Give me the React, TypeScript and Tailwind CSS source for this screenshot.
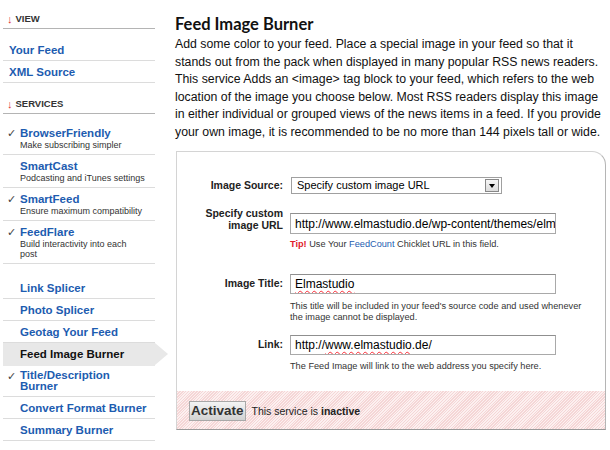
import React from 'react';

const LINK = 'text-[#1d5cb0]';

function Header({ label, top }: { label: string; top: string }) {
  return (
    <div className={`${top} flex items-center gap-[3px] border-b border-[#b4b4b4] pb-[2px] pl-[4px] text-[9.5px] font-bold leading-[14px] text-[#333]`}>
      <span className="text-[11px] font-normal text-[#d33]">↓</span>
      {label}
    </div>
  );
}

function Simple({ label, indent = 'pl-[6px]', top = '' }: { label: string; indent?: string; top?: string }) {
  return (
    <div className={`${top} ${indent} border-b border-[#dcdcdc] pt-[4px] pb-[3px] text-[11.5px] font-bold leading-[14px] ${LINK}`}>
      {label}
    </div>
  );
}

function Service({ title, sub, checked, top = '' }: { title: string; sub: React.ReactNode; checked?: boolean; top?: string }) {
  return (
    <div className={`${top} relative border-b border-[#dcdcdc] pt-[4px] pb-[4px] pl-[17px]`}>
      {checked && <span className="absolute left-[4px] top-[4px] text-[11px] leading-[14px] text-[#444]">✓</span>}
      <div className={`text-[11.5px] font-bold leading-[14px] ${LINK}`}>{title}</div>
      <div className="text-[9px] leading-[10px] text-[#333]">{sub}</div>
    </div>
  );
}

function Sidebar() {
  return (
    <aside className="ml-[3px] w-[152px] shrink-0">
      <Header label="VIEW" top="mt-[12px]" />
      <Simple label="Your Feed" top="mt-[10px]" />
      <Simple label="XML Source" />
      <Header label="SERVICES" top="mt-[14px]" />
      <Service top="mt-[8px]" checked title="BrowserFriendly" sub="Make subscribing simpler" />
      <Service title="SmartCast" sub="Podcasting and iTunes settings" />
      <Service checked title="SmartFeed" sub="Ensure maximum compatibility" />
      <Service checked title="FeedFlare" sub={<>Build interactivity into each<br />post</>} />
      <Simple label="Link Splicer" indent="pl-[17px]" top="mt-[13px]" />
      <Simple label="Photo Splicer" indent="pl-[17px]" />
      <Simple label="Geotag Your Feed" indent="pl-[17px]" />
      <div className="relative h-[23px] bg-[#e8e8e8] pl-[17px] pt-[4px] text-[11.5px] font-bold leading-[15px] text-[#111]">
        Feed Image Burner
        <span className="absolute left-full top-0 h-0 w-0 border-y-[11.5px] border-l-[13px] border-y-transparent border-l-[#e8e8e8]" />
      </div>
      <div className="relative border-b border-[#dcdcdc] pt-[4px] pb-[4px] pl-[17px]">
        <span className="absolute left-[4px] top-[4px] text-[11px] leading-[12px] text-[#444]">✓</span>
        <div className={`text-[11.5px] font-bold leading-[11px] ${LINK}`}>Title/Description<br />Burner</div>
      </div>
      <Simple label="Convert Format Burner" indent="pl-[17px]" />
      <Simple label="Summary Burner" indent="pl-[17px]" />
    </aside>
  );
}

function Field({ children, w = 'w-[266px]', h = 'h-[20px]' }: { children: React.ReactNode; w?: string; h?: string }) {
  return (
    <div className={`${w} ${h} flex items-center overflow-hidden whitespace-nowrap border border-[#a9a9a9] border-t-[#8f8f8f] bg-white pl-[4px] text-[12px] text-black`}>
      {children}
    </div>
  );
}

const Squiggle = ({ children }: { children: React.ReactNode }) => (
  <span className="underline decoration-red-500 decoration-wavy decoration-1 underline-offset-2">{children}</span>
);

export default function App() {
  return (
    <div className="flex h-[450px] w-[610px] overflow-hidden bg-white font-['Liberation_Sans',Arial,sans-serif] text-[#111]">
      <Sidebar />
      <main className="ml-[20px] flex-1">
        <h1 className="mt-[14px] font-['Lato',sans-serif] text-[16.5px] font-bold leading-[20px] text-[#111]">Feed Image Burner</h1>
        <p className="mt-[2px] whitespace-nowrap text-[12.3px] leading-[17.5px] text-[#111]">
          Add some color to your feed. Place a special image in your feed so that it<br />
          stands out from the pack when displayed in many popular RSS news readers.<br />
          This service Adds an &lt;image&gt; tag block to your feed, which refers to the web<br />
          location of the image you choose below. Most RSS readers display this image<br />
          in either individual or grouped views of the news items in a feed. If you provide<br />
          your own image, it is recommended to be no more than 144 pixels tall or wide.
        </p>

        <section className="mt-[10px] ml-[1px] w-[430px] rounded-tr-[14px] border border-[#d4d4d4] border-r-[#b5b5b5] border-b-[#9a9a9a]">
          <div className="pl-[10px]">
            <div className="mt-[25px] flex items-center gap-[8px]">
              <label className="w-[96px] text-right text-[10.5px] font-bold text-[#222]">Image Source:</label>
              <div className="flex h-[17px] w-[211px] items-center justify-between border border-[#a0a0a0] bg-white pl-[5px] pr-[2px] text-[11px] text-black">
                Specify custom image URL
                <span className="flex h-[13px] w-[14px] items-center justify-center border border-[#888] bg-gradient-to-b from-[#f6f6f6] to-[#dcdcdc]">
                  <span className="h-0 w-0 border-x-[3.5px] border-t-[4px] border-x-transparent border-t-black" />
                </span>
              </div>
            </div>

            <div className="mt-[19px] flex items-start gap-[7px]">
              <label className="-mt-[6px] w-[96px] text-right text-[10.5px] font-bold leading-[12px] text-[#222]">Specify custom<br />image URL</label>
              <Field h="h-[21px]">http://www.elmastudio.de/wp-content/themes/elm</Field>
            </div>
            <p className="mt-[5px] ml-[103px] text-[9.2px] leading-[11px] text-[#333]">
              <span className="font-bold text-[#e0202a]">Tip!</span> Use Your <span className={LINK}>FeedCount</span> Chicklet URL in this field.
            </p>

            <div className="mt-[24px] flex items-center gap-[7px]">
              <label className="w-[96px] text-right text-[10.5px] font-bold text-[#222]">Image Title:</label>
              <Field><Squiggle>Elmastudio</Squiggle></Field>
            </div>
            <p className="mt-[7px] ml-[103px] text-[9.2px] leading-[11px] text-[#333]">
              This title will be included in your feed's source code and used whenever<br />
              the image cannot be displayed.
            </p>

            <div className="mt-[12px] flex items-center gap-[7px]">
              <label className="w-[96px] text-right text-[10.5px] font-bold text-[#222]">Link:</label>
              <Field>http://<Squiggle>www.elmastudio</Squiggle>.de/</Field>
            </div>
            <p className="mt-[6px] ml-[103px] text-[9.2px] leading-[11px] text-[#333]">
              The Feed Image will link to the web address you specify here.
            </p>
          </div>

          <div className="mt-[19px] flex h-[38px] items-start gap-[6px] bg-[repeating-linear-gradient(135deg,#f5d6d6_0px,#f5d6d6_1px,#fcf0f0_1px,#fcf0f0_2px)] pl-[12px] pt-[10px]">
            <button className="h-[20px] border border-[#a8a8a8] bg-gradient-to-b from-[#f4f4f4] to-[#d2d2d2] px-[1px] text-[13.5px] font-bold leading-[18px] text-[#333]">
              Activate
            </button>
            <span className="mt-[3px] text-[10.5px] leading-[14px] text-[#222]">
              This service is <b>inactive</b>
            </span>
          </div>
        </section>
      </main>
    </div>
  );
}
